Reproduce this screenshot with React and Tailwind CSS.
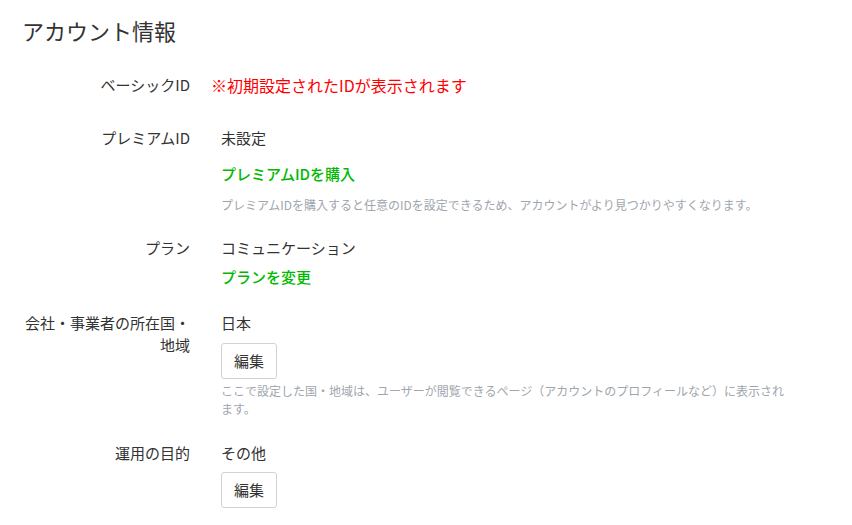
import React from "react";

function Row({ label, children, className = "" }) {
  return (
    <div className={`flex ${className}`}>
      <div className="w-[190px] shrink-0 pl-5 text-right text-[15px] leading-[22px] text-[#333]">
        {label}
      </div>
      <div className="ml-[31px] w-[568px] text-[15px] leading-[22px] text-[#333]">
        {children}
      </div>
    </div>
  );
}

function EditButton() {
  return (
    <button
      type="button"
      className="flex h-[36px] w-[56px] items-center justify-center rounded-[3px] border border-[#cfd2d6] bg-white text-[15px] text-[#333]"
    >
      編集
    </button>
  );
}

export default function App() {
  return (
    <div
      className="min-h-[525px] w-[852px] bg-white"
      style={{ fontFamily: '"Noto Sans CJK JP", "Noto Sans", sans-serif' }}
    >
      {/* Title */}
      <h1 className="pl-[22px] pt-[15px] text-[22px] leading-[30px] text-[#333]">
        アカウント情報
      </h1>

      {/* Basic ID */}
      <Row label="ベーシックID" className="mt-[29px]">
        <span className="-ml-[10px] text-[16px] text-[#ff0000]">
          ※初期設定されたIDが表示されます
        </span>
      </Row>

      {/* Premium ID */}
      <Row label="プレミアムID" className="mt-[30px]">
        <div>未設定</div>
        <a href="#" className="mt-[14px] block font-medium text-[#00b900]">
          プレミアムIDを購入
        </a>
        <p className="mt-[11px] text-[12px] leading-[18px] text-[#a0a6ad]">
          プレミアムIDを購入すると任意のIDを設定できるため、アカウントがより見つかりやすくなります。
        </p>
      </Row>

      {/* Plan */}
      <Row label="プラン" className="mt-[23px]">
        <div>コミュニケーション</div>
        <a href="#" className="mt-[7px] block font-medium text-[#00b900]">
          プランを変更
        </a>
      </Row>

      {/* Country */}
      <Row label="会社・事業者の所在国・地域" className="mt-[24px]">
        <div>日本</div>
        <div className="mt-[9px]">
          <EditButton />
        </div>
        <p className="mt-[3px] text-[12px] leading-[18px] text-[#a0a6ad]">
          ここで設定した国・地域は、ユーザーが閲覧できるページ（アカウントのプロフィールなど）に表示されます。
        </p>
      </Row>

      {/* Purpose */}
      <Row label="運用の目的" className="mt-[24px]">
        <div>その他</div>
        <div className="mt-[8px]">
          <EditButton />
        </div>
      </Row>
    </div>
  );
}
